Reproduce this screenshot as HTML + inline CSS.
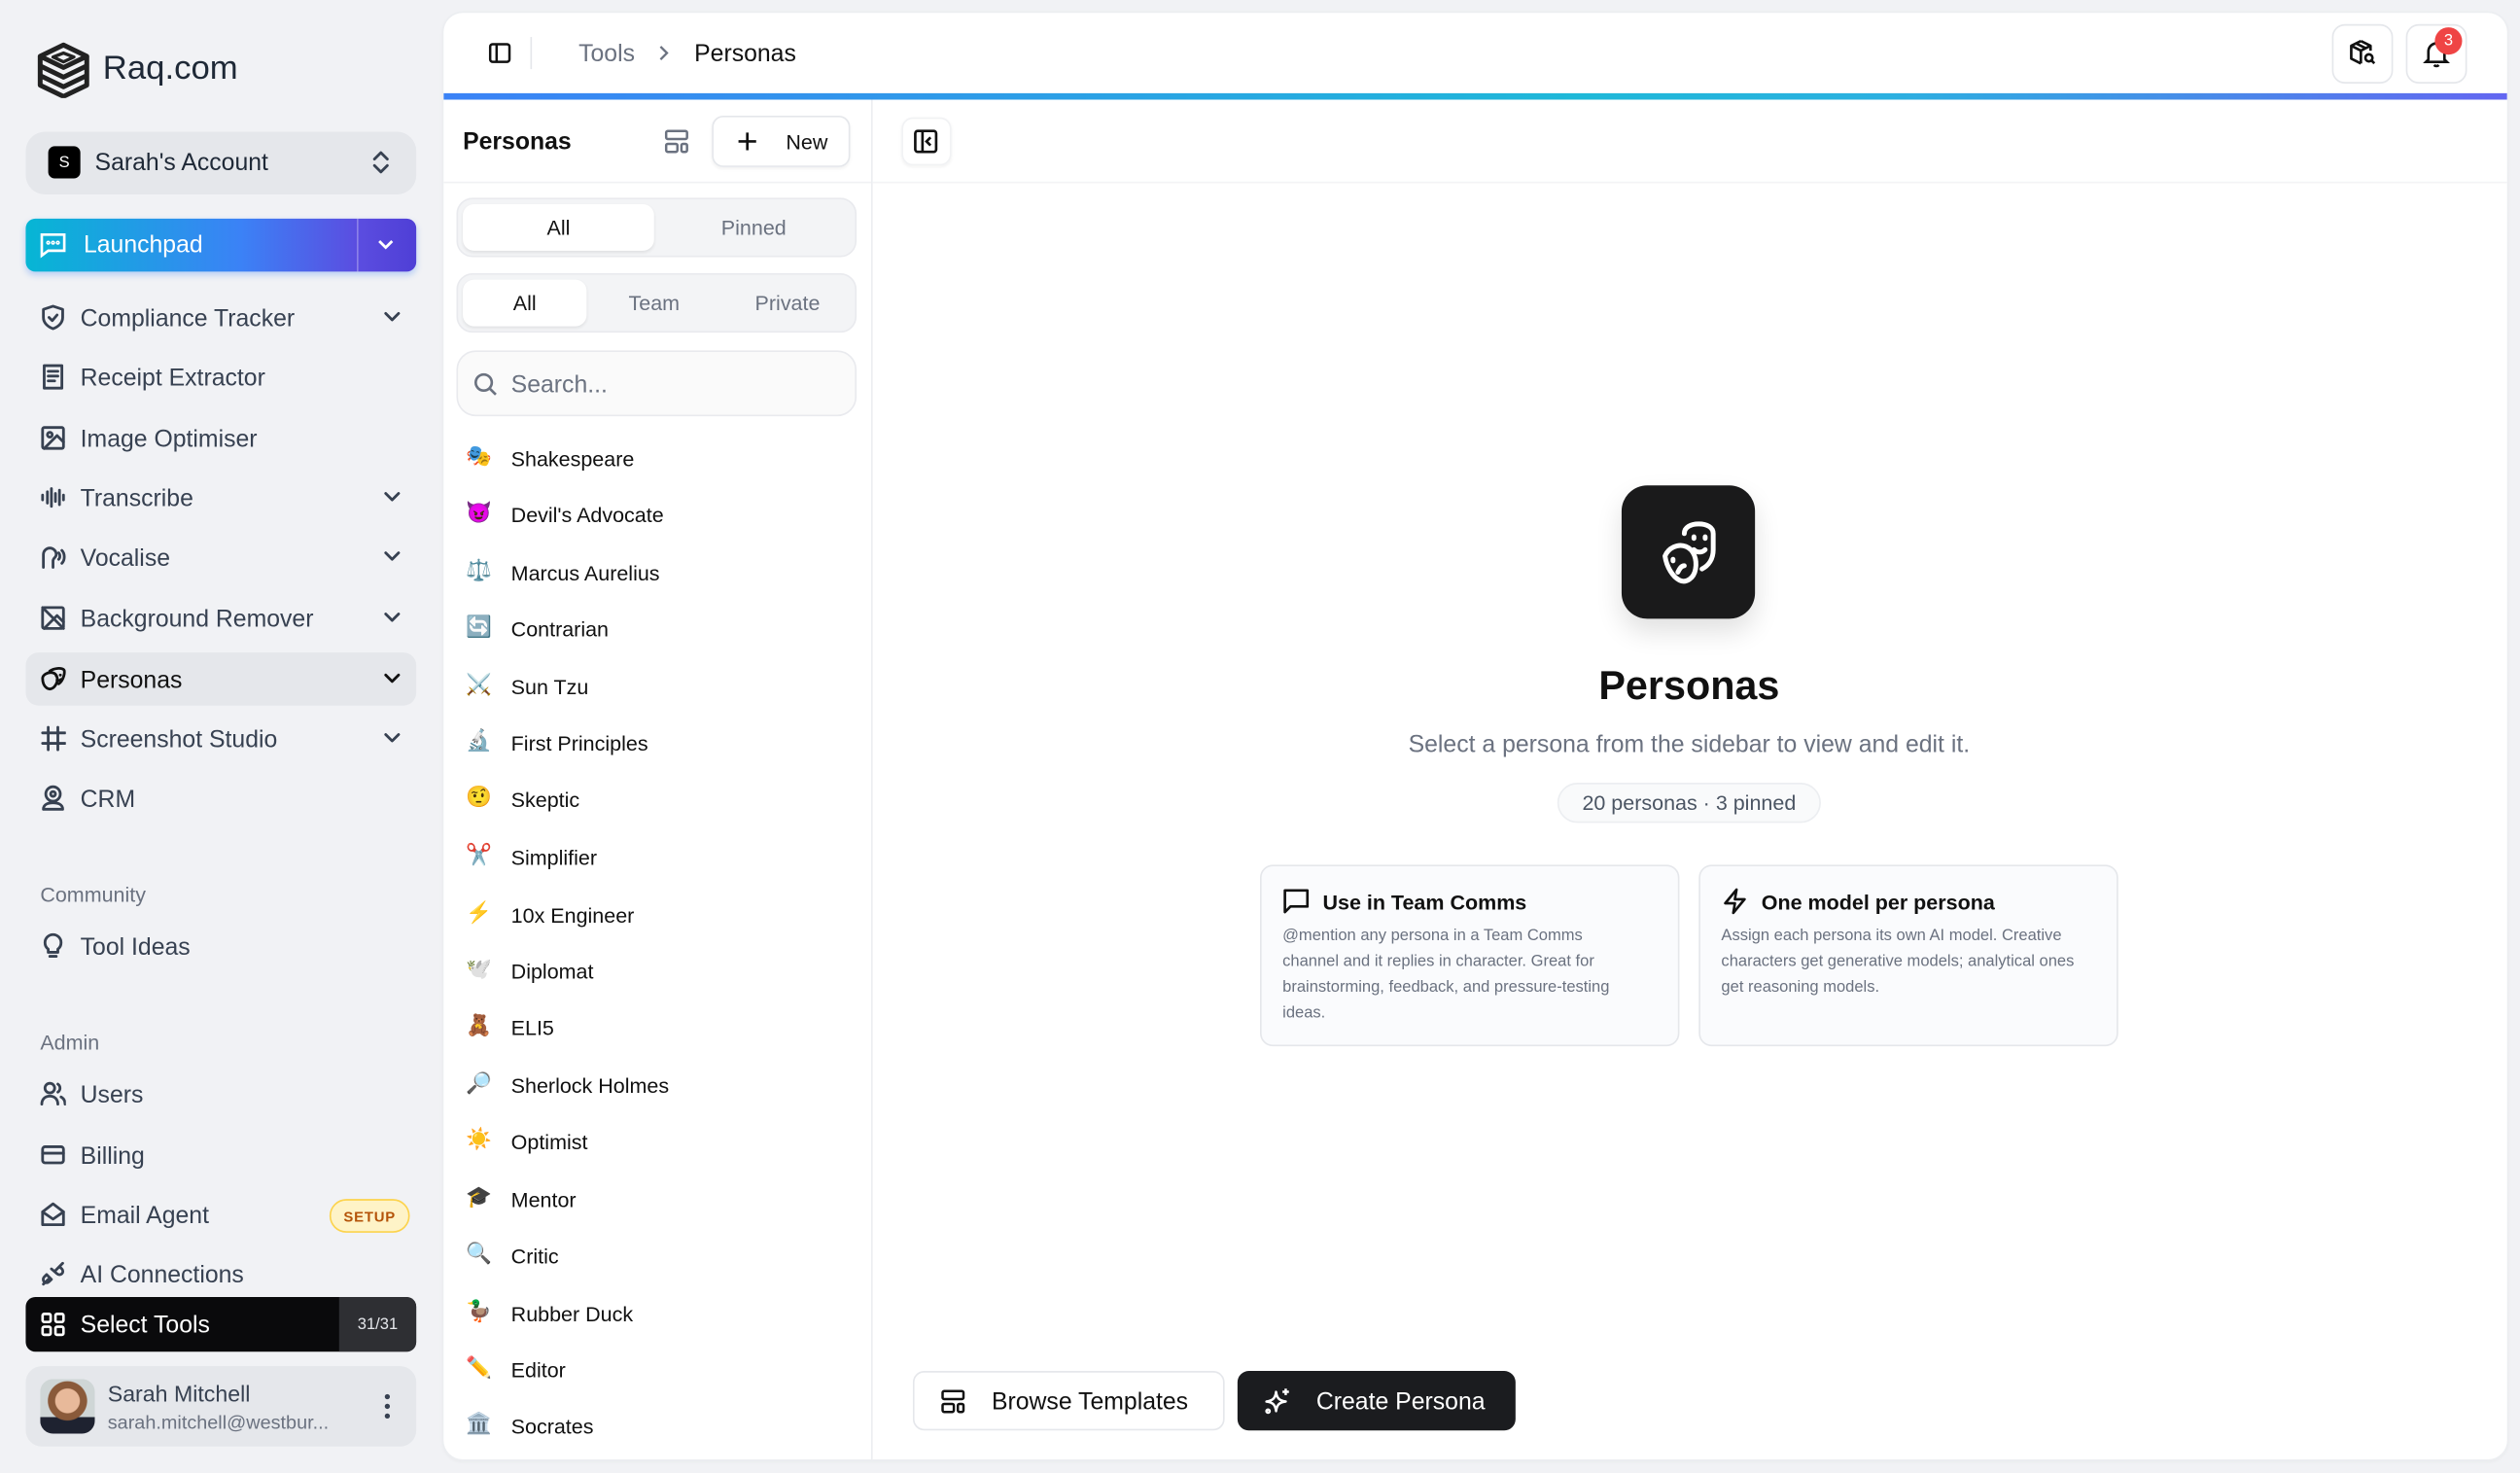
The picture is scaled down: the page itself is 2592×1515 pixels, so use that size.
<!DOCTYPE html>
<html><head><meta charset="utf-8">
<style>
*{box-sizing:border-box;margin:0;padding:0}
html,body{width:2592px;height:1515px;overflow:hidden;background:#f1f2f5}
#w{width:1568px;height:916px;transform:scale(1.65306);transform-origin:0 0;position:relative;font-family:"Liberation Sans","DejaVu Sans",sans-serif;color:#111;background:#f1f2f5}
.a{position:absolute}
svg{display:block}
.ic{stroke:#374151;fill:none;stroke-width:1.7;stroke-linecap:round;stroke-linejoin:round}
.nav{position:absolute;left:16px;width:243px;height:33px;display:flex;align-items:center;font-size:15px;color:#374151}
.nav svg{position:absolute;left:9px;top:8px}
.nav span{position:absolute;left:34px;top:9px}
.nav .ch{left:auto;right:8px;top:9px}
.lbl{position:absolute;left:25px;font-size:13px;color:#6b7280}
.li{position:absolute;left:290px;height:20px;display:flex;align-items:center;font-size:13px;color:#111}
.li i{font-style:normal;width:20px;font-size:13px;font-family:"Noto Color Emoji","DejaVu Sans",sans-serif}
.li span{position:absolute;left:28px;top:4px;white-space:nowrap}
.seg{position:absolute;left:284px;width:249px;height:37px;background:#f3f4f6;border:1px solid #e9eaee;border-radius:10px}
.seg div{position:absolute;top:3px;height:29px;display:flex;align-items:center;justify-content:center;font-size:13px;color:#6b7280}
.seg .on{background:#fff;color:#111;border-radius:7px;box-shadow:0 1px 2px rgba(0,0,0,.08)}
.card{position:absolute;top:538px;width:261px;height:113px;background:#fafbfd;border:1px solid #e5e7eb;border-radius:8px}
.card h4{position:absolute;left:38px;top:15px;font-size:13px;font-weight:bold;color:#111}
.card p{position:absolute;left:13px;top:36px;font-size:10px;line-height:16px;color:#6b7280}
.card svg{position:absolute;left:13px;top:13px}
</style></head><body><div id="w">

<svg class="a" style="left:22px;top:25px" width="35" height="36" viewBox="0 0 35 36"><g fill="none" stroke="#222" stroke-width="3" stroke-linejoin="round"><path d="M17.5 3 L32 10 L17.5 17 L3 10 Z"/><path d="M17.5 8 L24 10.5 L17.5 13.5 L11 10.5 Z" stroke-width="2"/><path d="M3 16 L17.5 23 L32 16"/><path d="M3 22 L17.5 29 L32 22"/><path d="M3 10 V28 L17.5 35 L32 28 V10"/></g></svg>
<div class="a" style="left:64px;top:31px;font-size:21px;color:#1f2937">Raq.com</div>

<div class="a" style="left:16px;top:82px;width:243px;height:39px;background:#e5e7eb;border-radius:12px"></div>
<div class="a" style="left:30px;top:91px;width:20px;height:20px;background:#000;border-radius:4px;color:#fff;font-size:10px;display:flex;align-items:center;justify-content:center">S</div>
<div class="a" style="left:59px;top:93px;font-size:15px;color:#1f2937">Sarah's Account</div>
<svg class="a ic" style="left:230px;top:93px" width="14" height="16" viewBox="0 0 14 16"><path d="M3 6l4-4 4 4M3 10l4 4 4-4"/></svg>

<div class="a" style="left:16px;top:136px;width:243px;height:33px;border-radius:6px;background:linear-gradient(90deg,#06b6d4,#3b82f6 55%,#5b4de0 85%,#4f3fd6);box-shadow:0 2px 4px rgba(59,130,246,.3)"></div>
<div class="a" style="left:222px;top:136px;width:1px;height:33px;background:rgba(255,255,255,.3)"></div>
<svg class="a" style="left:24px;top:144px" width="18" height="17" viewBox="0 0 18 17" fill="none" stroke="#fff" stroke-width="1.6"><path d="M2 2h14v10H6l-4 3z"/><circle cx="6" cy="7" r=".5"/><circle cx="9" cy="7" r=".5"/><circle cx="12" cy="7" r=".5"/></svg>
<div class="a" style="left:52px;top:144px;font-size:15px;color:#fff">Launchpad</div>
<svg class="a" style="left:234px;top:147px" width="12" height="10" viewBox="0 0 12 10" fill="none" stroke="#fff" stroke-width="1.7"><path d="M2 3l4 4 4-4"/></svg>

<div class="nav" style="top:181px"><svg class="ic" width="16" height="17" viewBox="0 0 16 17"><path d="M8 1.5l6 2v5c0 3.5-3 6-6 7-3-1-6-3.5-6-7v-5z"/><path d="M5.5 8.5l2 2 3-3.5"/></svg><span>Compliance Tracker</span><svg class="ic ch" width="14" height="14" viewBox="0 0 14 14"><path d="M3 5l4 4 4-4"/></svg></div>
<div class="nav" style="top:218px"><svg class="ic" width="16" height="17" viewBox="0 0 16 17"><path d="M2.5 1.5h11v14h-11z"/><path d="M5 5h6M5 8h6M5 11h4"/></svg><span>Receipt Extractor</span></div>
<div class="nav" style="top:256px"><svg class="ic" width="16" height="17" viewBox="0 0 16 17"><rect x="1.5" y="2" width="13" height="13" rx="1"/><circle cx="6" cy="6.5" r="1.5"/><path d="M14.5 11l-4-4-8 8"/></svg><span>Image Optimiser</span></div>
<div class="nav" style="top:293px"><svg class="ic" width="16" height="17" viewBox="0 0 16 17"><path d="M1.5 7v3M4.5 5v7M7 3v11M9.5 6v5M12 4v9M14.5 7v3"/></svg><span>Transcribe</span><svg class="ic ch" width="14" height="14" viewBox="0 0 14 14"><path d="M3 5l4 4 4-4"/></svg></div>
<div class="nav" style="top:330px"><svg class="ic" width="16" height="17" viewBox="0 0 16 17"><path d="M2 15V7a4 4 0 018 0c0 2-2 2-2 4v4"/><path d="M11.5 6c1 1 1 3 0 4M13.5 4.5c2 2 2 6 0 8"/></svg><span>Vocalise</span><svg class="ic ch" width="14" height="14" viewBox="0 0 14 14"><path d="M3 5l4 4 4-4"/></svg></div>
<div class="nav" style="top:368px"><svg class="ic" width="16" height="17" viewBox="0 0 16 17"><rect x="1.5" y="2" width="13" height="13" rx="1"/><path d="M1.5 2l13 13M14.5 11l-4-4-8 8"/></svg><span>Background Remover</span><svg class="ic ch" width="14" height="14" viewBox="0 0 14 14"><path d="M3 5l4 4 4-4"/></svg></div>
<div class="a" style="left:16px;top:406px;width:243px;height:33px;background:#e5e7eb;border-radius:8px"></div>
<div class="nav" style="top:406px;color:#111"><svg class="ic" style="stroke:#111" width="16" height="17" viewBox="0 0 16 17"><path d="M6 3.5c3-2 7-2 8.5-1s0 7-3 9"/><path d="M1.5 8c0-2 3-4 6-3.5s4 4 2.5 7-4 4-6 2.5-2.5-4-2.5-6z"/><path d="M10 6.5h.1M12.5 6h.1M10.5 9c1 .5 2 .3 2.5-.3"/></svg><span>Personas</span><svg class="ic ch" style="stroke:#111" width="14" height="14" viewBox="0 0 14 14"><path d="M3 5l4 4 4-4"/></svg></div>
<div class="nav" style="top:443px"><svg class="ic" width="16" height="17" viewBox="0 0 16 17"><path d="M5 1.5v14M11 1.5v14M1.5 5h14M1.5 11.5h14"/></svg><span>Screenshot Studio</span><svg class="ic ch" width="14" height="14" viewBox="0 0 14 14"><path d="M3 5l4 4 4-4"/></svg></div>
<div class="nav" style="top:480px"><svg class="ic" width="16" height="17" viewBox="0 0 16 17"><circle cx="8" cy="6" r="4.5"/><circle cx="8" cy="6" r="1.5"/><path d="M2 15.5c0-3 3-4 6-4s6 1 6 4z"/></svg><span>CRM</span></div>

<div class="lbl" style="top:549px">Community</div>
<div class="nav" style="top:572px"><svg class="ic" width="16" height="17" viewBox="0 0 16 17"><path d="M5 10.5C3.5 9.5 3 8 3 6.5a5 5 0 0110 0c0 1.5-.5 3-2 4v2H5zM6 15h4"/></svg><span>Tool Ideas</span></div>
<div class="lbl" style="top:641px">Admin</div>
<div class="nav" style="top:664px"><svg class="ic" width="16" height="17" viewBox="0 0 16 17"><circle cx="6" cy="5" r="3"/><path d="M1 15c0-3 2-5 5-5s5 2 5 5M11 2.5a3 3 0 010 5M13 10.5c1.5.8 2.5 2.5 2.5 4.5"/></svg><span>Users</span></div>
<div class="nav" style="top:702px"><svg class="ic" width="16" height="17" viewBox="0 0 16 17"><rect x="1.5" y="3.5" width="13" height="10" rx="1.5"/><path d="M1.5 7.5h13"/></svg><span>Billing</span></div>
<div class="nav" style="top:739px"><svg class="ic" width="16" height="17" viewBox="0 0 16 17"><path d="M1.5 7l6.5-5 6.5 5v8h-13z"/><path d="M1.5 7l6.5 4.5L14.5 7"/></svg><span>Email Agent</span></div>
<div class="a" style="left:205px;top:746px;width:50px;height:21px;background:#fef3c7;border:1px solid #fcd34d;border-radius:11px;font-size:9px;font-weight:bold;color:#b45309;display:flex;align-items:center;justify-content:center;letter-spacing:.5px">SETUP</div>
<div class="nav" style="top:776px"><svg class="ic" width="16" height="17" viewBox="0 0 16 17"><path d="M2 15l3-3M11 5l3-3M4 9l3 3-1.5 1.5a2 2 0 01-3-3zM9 7l3-3M12 4l1.5 1.5a2 2 0 01-3 3L7 5.5"/></svg><span>AI Connections</span></div>

<div class="a" style="left:16px;top:807px;width:243px;height:34px;background:#0a0a0c;border-radius:6px;overflow:hidden"><div class="a" style="left:195px;top:0;width:48px;height:34px;background:#2e2f33;color:#e5e7eb;font-size:10px;display:flex;align-items:center;justify-content:center">31/31</div></div>
<svg class="a" style="left:25px;top:816px" width="16" height="16" viewBox="0 0 16 16" fill="none" stroke="#fff" stroke-width="1.6"><rect x="1.5" y="1.5" width="5" height="5" rx="1"/><rect x="9.5" y="1.5" width="5" height="5" rx="1"/><rect x="1.5" y="9.5" width="5" height="5" rx="1"/><rect x="9.5" y="9.5" width="5" height="5" rx="1"/></svg>
<div class="a" style="left:50px;top:816px;font-size:15px;color:#fff">Select Tools</div>

<div class="a" style="left:16px;top:850px;width:243px;height:50px;background:#e5e7eb;border-radius:10px"></div>
<div class="a" style="left:25px;top:858px;width:34px;height:34px;border-radius:8px;background:radial-gradient(circle at 50% 40%,#e8b99a 0 28%,#8a5a3a 30% 45%,transparent 47%),linear-gradient(180deg,#cfd6d6 0 70%,#1e2230 70%)"></div>
<div class="a" style="left:67px;top:859px;font-size:14px;color:#374151">Sarah Mitchell</div>
<div class="a" style="left:67px;top:878px;font-size:12px;color:#6b7280">sarah.mitchell@westbur...</div>
<svg class="a" style="left:238px;top:866px" width="6" height="18" viewBox="0 0 6 18" fill="#374151"><circle cx="3" cy="3" r="1.6"/><circle cx="3" cy="9" r="1.6"/><circle cx="3" cy="15" r="1.6"/></svg>

<div class="a" style="left:276px;top:8px;width:1284px;height:900px;background:#fff;border-radius:12px;box-shadow:0 0 0 1px #eceef1,0 1px 3px rgba(0,0,0,.05);overflow:hidden">
 <div class="a" style="left:0;top:50px;width:1284px;height:4px;background:linear-gradient(90deg,#3b82f6,#1eb8d8 55%,#2bb0e0 70%,#6366f1)"></div>
 <div class="a" style="left:266px;top:54px;width:1px;height:846px;background:#eceef1"></div>
 <div class="a" style="left:0;top:105px;width:266px;height:1px;background:#f1f2f4"></div>
 <div class="a" style="left:267px;top:105px;width:1017px;height:1px;background:#f3f4f6"></div>
</div>

<svg class="a" style="left:304px;top:26px" width="14" height="14" viewBox="0 0 14 14" fill="none" stroke="#111" stroke-width="1.5"><rect x="1" y="1.5" width="12" height="11" rx="1.5"/><path d="M5 1.5v11"/></svg>
<div class="a" style="left:330px;top:23px;width:1px;height:20px;background:#e5e7eb"></div>
<div class="a" style="left:360px;top:25px;font-size:15px;color:#6b7280">Tools</div>
<svg class="a" style="left:408px;top:27px" width="10" height="12" viewBox="0 0 10 12" fill="none" stroke="#6b7280" stroke-width="1.4"><path d="M3 2l4 4-4 4"/></svg>
<div class="a" style="left:432px;top:25px;font-size:15px;color:#111">Personas</div>
<div class="a" style="left:1451px;top:15px;width:38px;height:37px;border:1px solid #e5e7eb;border-radius:8px"></div>
<svg class="a" style="left:1461px;top:24px" width="18" height="18" viewBox="0 0 18 18" fill="none" stroke="#111" stroke-width="1.6" stroke-linejoin="round"><path d="M8 1.5l6 3v3M8 1.5l-6 3v8l6 3M2 4.5l6 3 6-3M8 7.5v8M5 3l6 3"/><circle cx="13" cy="12" r="2.2"/><path d="M14.6 13.6l1.8 1.8"/></svg>
<div class="a" style="left:1497px;top:15px;width:38px;height:37px;border:1px solid #e5e7eb;border-radius:8px"></div>
<svg class="a" style="left:1507px;top:24px" width="18" height="19" viewBox="0 0 18 19" fill="none" stroke="#111" stroke-width="1.6"><path d="M4 13V8a5 5 0 0110 0v5l1.5 1.5h-13zM7.5 16.5c.8.8 2.2.8 3 0"/></svg>
<div class="a" style="left:1515px;top:17px;width:17px;height:17px;border-radius:50%;background:#ef4444;color:#fff;font-size:10px;display:flex;align-items:center;justify-content:center">3</div>

<div class="a" style="left:288px;top:80px;font-size:15px;font-weight:bold;color:#111">Personas</div>
<svg class="a" style="left:413px;top:80px" width="16" height="16" viewBox="0 0 16 16" fill="none" stroke="#6b7280" stroke-width="1.5"><rect x="1.5" y="1.5" width="13" height="5" rx="1"/><rect x="1.5" y="9.5" width="7" height="5" rx="1"/><rect x="11" y="9.5" width="3.5" height="5" rx="1"/></svg>
<div class="a" style="left:443px;top:72px;width:86px;height:32px;border:1px solid #e5e7eb;border-radius:7px;box-shadow:0 1px 2px rgba(0,0,0,.05)"></div>
<svg class="a" style="left:458px;top:81px" width="14" height="14" viewBox="0 0 14 14" fill="none" stroke="#111" stroke-width="1.6"><path d="M7 1.5v11M1.5 7h11"/></svg>
<div class="a" style="left:489px;top:81px;font-size:13px;color:#111">New</div>

<div class="seg" style="top:123px"><div class="on" style="left:3px;width:119px">All</div><div style="left:122px;width:124px">Pinned</div></div>
<div class="seg" style="top:170px"><div class="on" style="left:3px;width:77px">All</div><div style="left:80px;width:84px">Team</div><div style="left:164px;width:82px">Private</div></div>
<div class="a" style="left:284px;top:218px;width:249px;height:41px;border:1px solid #e9eaee;border-radius:12px;background:#fafafa"></div>
<svg class="a" style="left:294px;top:231px" width="16" height="16" viewBox="0 0 16 16" fill="none" stroke="#6b7280" stroke-width="1.6"><circle cx="7" cy="7" r="5"/><path d="M11 11l3.5 3.5"/></svg>
<div class="a" style="left:318px;top:231px;font-size:15px;color:#6b7280">Search...</div>

<div class="li" style="top:274px"><i>🎭</i><span>Shakespeare</span></div>
<div class="li" style="top:309px"><i>😈</i><span>Devil's Advocate</span></div>
<div class="li" style="top:345px"><i>⚖️</i><span>Marcus Aurelius</span></div>
<div class="li" style="top:380px"><i>🔄</i><span>Contrarian</span></div>
<div class="li" style="top:416px"><i>⚔️</i><span>Sun Tzu</span></div>
<div class="li" style="top:451px"><i>🔬</i><span>First Principles</span></div>
<div class="li" style="top:486px"><i>🤨</i><span>Skeptic</span></div>
<div class="li" style="top:522px"><i>✂️</i><span>Simplifier</span></div>
<div class="li" style="top:558px"><i>⚡</i><span>10x Engineer</span></div>
<div class="li" style="top:593px"><i>🕊️</i><span>Diplomat</span></div>
<div class="li" style="top:628px"><i>🧸</i><span>ELI5</span></div>
<div class="li" style="top:664px"><i>🔎</i><span>Sherlock Holmes</span></div>
<div class="li" style="top:699px"><i>☀️</i><span>Optimist</span></div>
<div class="li" style="top:735px"><i>🎓</i><span>Mentor</span></div>
<div class="li" style="top:770px"><i>🔍</i><span>Critic</span></div>
<div class="li" style="top:806px"><i>🦆</i><span>Rubber Duck</span></div>
<div class="li" style="top:841px"><i>✏️</i><span>Editor</span></div>
<div class="li" style="top:876px"><i>🏛️</i><span>Socrates</span></div>

<div class="a" style="left:561px;top:73px;width:31px;height:30px;border:1px solid #f1f2f4;border-radius:7px;box-shadow:0 1px 2px rgba(0,0,0,.05)"></div>
<svg class="a" style="left:568px;top:80px" width="16" height="16" viewBox="0 0 16 16" fill="none" stroke="#111" stroke-width="1.6"><rect x="1.5" y="1.5" width="13" height="13" rx="1.5"/><path d="M6 1.5v13M11 5.5L8.5 8l2.5 2.5"/></svg>

<div class="a" style="left:1009px;top:302px;width:83px;height:83px;background:#1a1a1b;border-radius:16px;box-shadow:0 8px 16px rgba(0,0,0,.12)"></div>
<svg class="a" style="left:1030px;top:322px" width="42" height="44" viewBox="0 0 42 44" fill="none" stroke="#fff" stroke-width="3" stroke-linecap="round" stroke-linejoin="round"><path d="M18 10c0-4 4-6 9-6s9 2 9 6v10c0 6-3 10-7 12"/><path d="M24 12v1M31 12v1M24 20c2 2 5 2 7 0"/><path d="M6 24c2-5 8-8 13-6s7 8 6 14-6 9-10 7-8-8-9-15z"/><path d="M11 26v1M18 30c-2 0-3 2-4 4"/></svg>

<div class="a" style="left:900px;top:413px;width:302px;text-align:center;font-size:25px;font-weight:bold;color:#111">Personas</div>
<div class="a" style="left:800px;top:455px;width:502px;text-align:center;font-size:15px;color:#6b7280">Select a persona from the sidebar to view and edit it.</div>
<div class="a" style="left:969px;top:487px;width:164px;height:25px;border:1px solid #eceef1;border-radius:13px;background:#f9fafb;font-size:13px;color:#4b5563;display:flex;align-items:center;justify-content:center">20 personas · 3 pinned</div>

<div class="card" style="left:784px"><svg width="17" height="17" viewBox="0 0 17 17" fill="none" stroke="#111" stroke-width="1.6" stroke-linejoin="round"><path d="M1.5 2h14v10H5l-3.5 3.5z"/></svg><h4>Use in Team Comms</h4><p style="width:205px">@mention any persona in a Team Comms channel and it replies in character. Great for brainstorming, feedback, and pressure-testing ideas.</p></div>
<div class="card" style="left:1057px"><svg width="17" height="17" viewBox="0 0 17 17" fill="none" stroke="#111" stroke-width="1.6" stroke-linejoin="round"><path d="M9.5 1.5L2.5 10h6l-1 6 7-8.5h-6z"/></svg><h4>One model per persona</h4><p style="width:222px">Assign each persona its own AI model. Creative characters get generative models; analytical ones get reasoning models.</p></div>

<div class="a" style="left:568px;top:853px;width:194px;height:37px;border:1px solid #e5e7eb;border-radius:7px;background:#fff"></div>
<svg class="a" style="left:585px;top:864px" width="16" height="16" viewBox="0 0 16 16" fill="none" stroke="#111" stroke-width="1.5"><rect x="1.5" y="1.5" width="13" height="5" rx="1"/><rect x="1.5" y="9.5" width="7" height="5" rx="1"/><rect x="11" y="9.5" width="3.5" height="5" rx="1"/></svg>
<div class="a" style="left:617px;top:864px;font-size:15px;color:#111">Browse Templates</div>
<div class="a" style="left:770px;top:853px;width:173px;height:37px;border-radius:7px;background:#1b1c1f"></div>
<svg class="a" style="left:786px;top:863px" width="18" height="18" viewBox="0 0 18 18" fill="none" stroke="#fff" stroke-width="1.5" stroke-linejoin="round"><path d="M8 3c.5 4 2 5.5 6 6-4 .5-5.5 2-6 6-.5-4-2-5.5-6-6 4-.5 5.5-2 6-6z"/><path d="M14 1v4M12 3h4"/><circle cx="3" cy="15" r="1"/></svg>
<div class="a" style="left:819px;top:864px;font-size:15px;color:#fff">Create Persona</div>

</div></body></html>
